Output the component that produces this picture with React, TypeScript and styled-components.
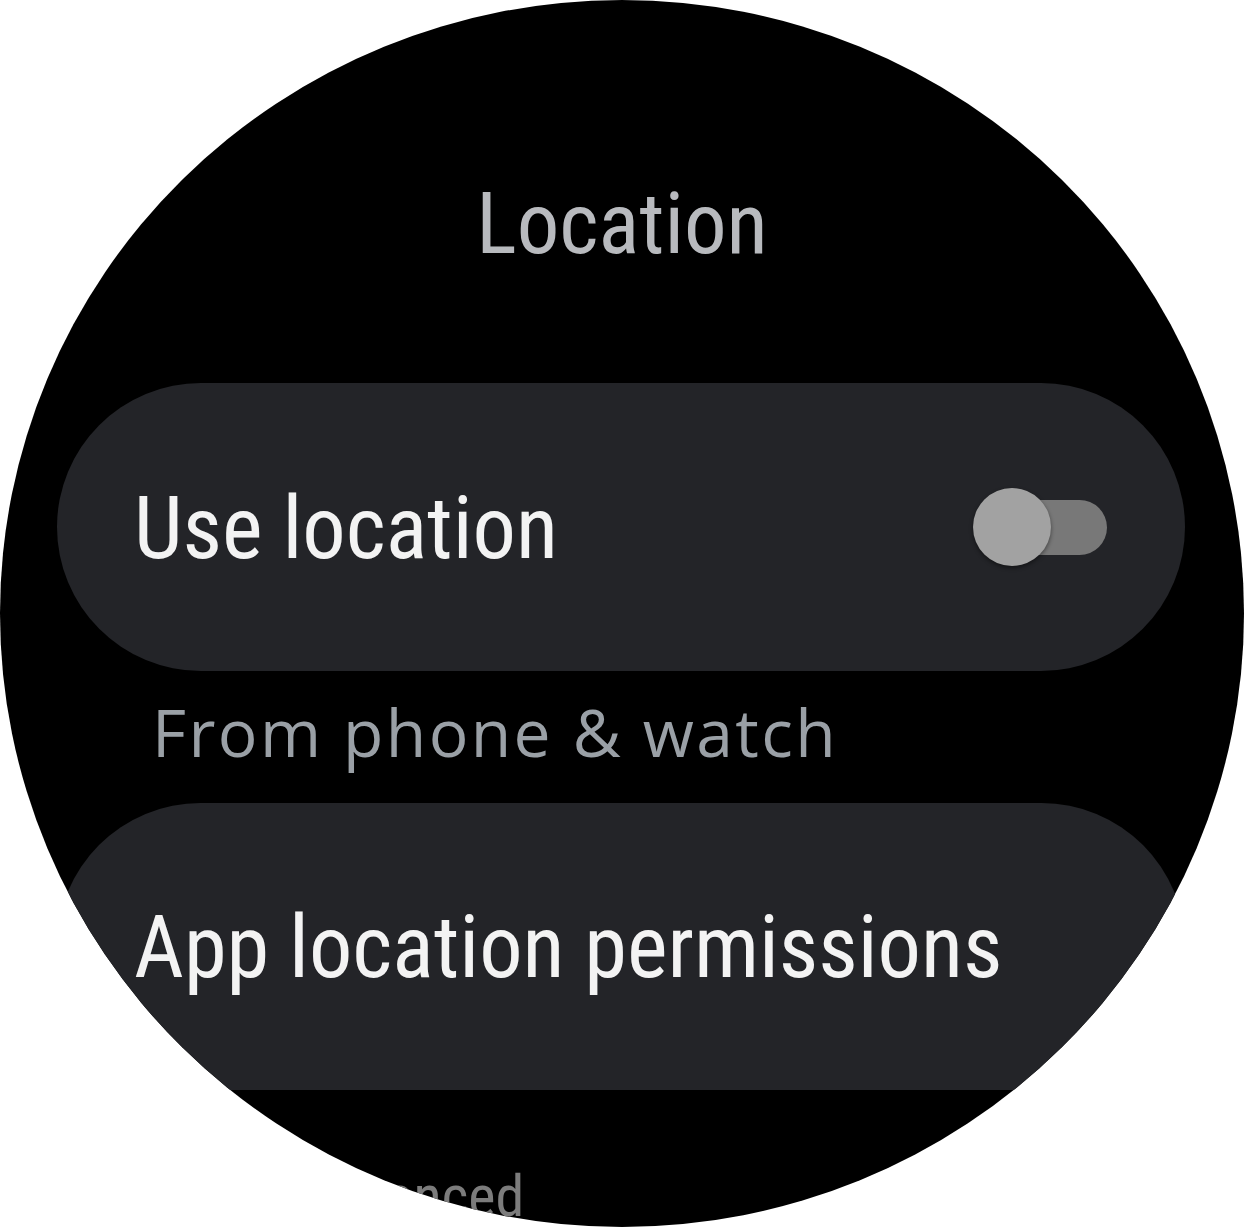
import React from "react";
import styled, { createGlobalStyle } from "styled-components";

const GlobalStyle = createGlobalStyle`
  html, body { margin: 0; padding: 0; background: #ffffff; }
  #root { width: 1244px; height: 1227px; }
`;

const Screen = styled.div`
  width: 1244px;
  height: 1227px;
  border-radius: 50%;
  overflow: hidden;
  background: #000000;
  box-sizing: border-box;
  padding-top: 174px;
  display: flex;
  flex-direction: column;
`;

const Title = styled.h1`
  margin: 0;
  font-family: "Roboto Condensed", Roboto, sans-serif;
  font-weight: 400;
  font-size: 85px;
  line-height: 100px;
  color: #b8babe;
  text-align: center;
`;

const List = styled.div`
  display: flex;
  flex-direction: column;
  padding: 0 59px 0 57px;
  margin-top: 109px;
`;

const Chip = styled.div<{ $height: number }>`
  height: ${(p) => p.$height}px;
  border-radius: ${(p) => p.$height / 2}px;
  background: #232428;
  display: flex;
  align-items: center;
  justify-content: space-between;
  padding: 0 78px 0 77px;
  box-sizing: border-box;
  flex-shrink: 0;
`;

const ChipLabel = styled.span`
  font-family: "Roboto Condensed", Roboto, sans-serif;
  font-weight: 400;
  font-size: 86.5px;
  line-height: 100px;
  color: #f3f3f3;
  white-space: nowrap;
  padding-top: 3px;
`;

const Toggle = styled.div`
  position: relative;
  width: 132px;
  height: 55px;
  border-radius: 28px;
  background: #787878;
  flex-shrink: 0;
`;

const Thumb = styled.div`
  position: absolute;
  left: -2px;
  top: 50%;
  width: 78px;
  height: 78px;
  margin-top: -39px;
  border-radius: 50%;
  background: #a2a2a2;
  box-shadow: 0 2px 4px rgba(0, 0, 0, 0.45);
`;

const Subtitle = styled.div`
  font-family: "Open Sans", sans-serif;
  font-weight: 400;
  font-size: 66px;
  line-height: 90px;
  letter-spacing: 2.4px;
  color: #9aa0a6;
  padding-left: 95px;
  margin: 15px 0 27px;
  white-space: nowrap;
`;

const SectionHeader = styled.div`
  font-family: "Roboto Condensed", Roboto, sans-serif;
  font-weight: 400;
  font-size: 58px;
  line-height: 70px;
  color: #7c7c7c;
  padding-left: 242px;
  margin-top: 71px;
  white-space: nowrap;
`;

export default function App() {
  return (
    <>
      <GlobalStyle />
      <Screen>
        <Title>Location</Title>
        <List>
          <Chip $height={288}>
            <ChipLabel>Use location</ChipLabel>
            <Toggle>
              <Thumb />
            </Toggle>
          </Chip>
          <Subtitle>From phone &amp; watch</Subtitle>
          <Chip $height={287}>
            <ChipLabel>App location permissions</ChipLabel>
          </Chip>
          <SectionHeader>Advanced</SectionHeader>
        </List>
      </Screen>
    </>
  );
}
